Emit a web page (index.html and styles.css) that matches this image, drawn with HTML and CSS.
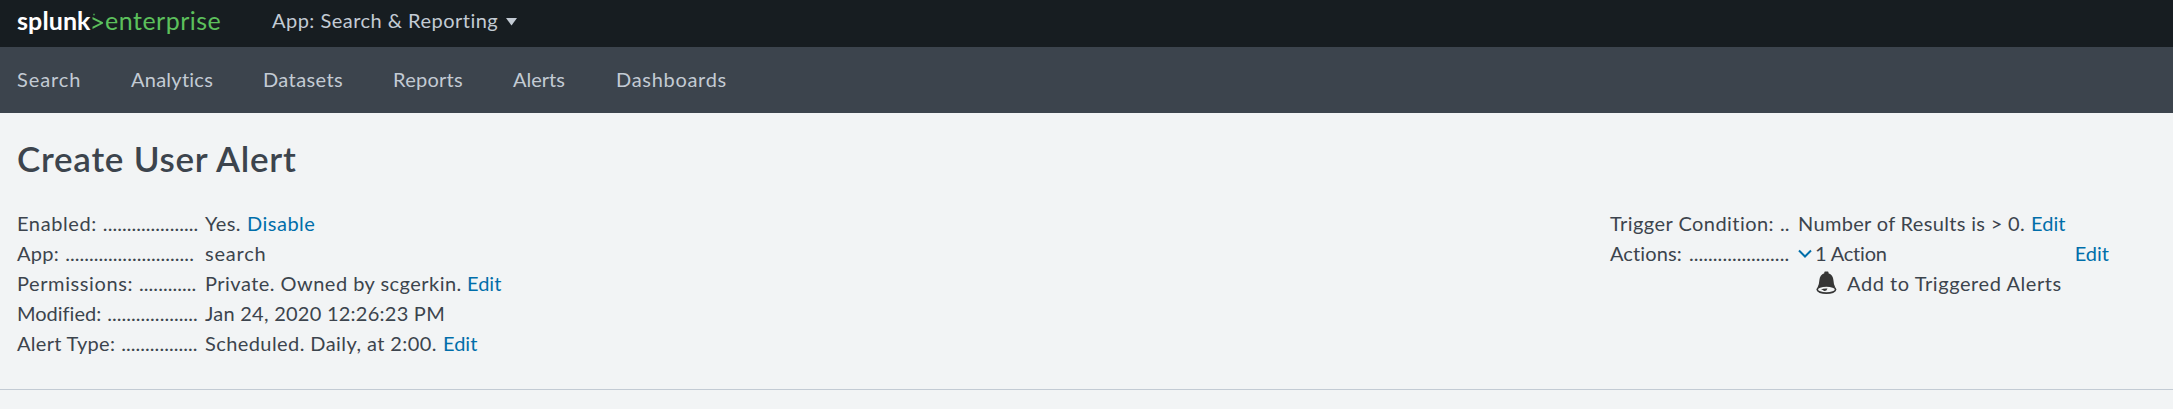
FILE: index.html
```html
<!DOCTYPE html>
<html lang="en">
<head>
<meta charset="utf-8">
<title>Create User Alert | Splunk</title>
<link rel="stylesheet" href="styles.css">
</head>
<body>
<header class="topbar">
  <a class="logo"><span class="logo-name">splunk</span><svg class="logo-mark" viewBox="0 0 12 18" width="12" height="18"><path d="M0.5 5 L11 10.3 V11.6 L0.5 17 V14.8 L8.2 11 L0.5 7.2 Z" fill="#5cc05c"/><path d="M1 2.6h2M2 1.5v2" stroke="#3c8c46" stroke-width="1"/></svg><span class="logo-product">enterprise</span></a>
  <a class="app-menu"><span class="app-name">App: Search &amp; Reporting</span><svg class="caret" viewBox="0 0 11 8" width="11" height="8"><path d="M0 0H11L5.5 7.5Z" fill="#c3cbd4"/></svg></a>
</header>
<nav class="appnav">
  <a class="nav-search">Search</a>
  <a class="nav-analytics">Analytics</a>
  <a class="nav-datasets">Datasets</a>
  <a class="nav-reports">Reports</a>
  <a class="nav-alerts">Alerts</a>
  <a class="nav-dashboards">Dashboards</a>
</nav>
<main class="page">
  <h1 class="title">Create User Alert</h1>
  <div class="details">
    <dl class="facts facts-main">
      <dt><span class="k-enabled">Enabled:</span><span class="dots">....................</span></dt>
      <dd><span class="v-yes">Yes.</span><a class="link l-disable">Disable</a></dd>
      <dt><span class="k-app">App:</span><span class="dots">...........................</span></dt>
      <dd><span class="v-search">search</span></dd>
      <dt><span class="k-perm">Permissions:</span><span class="dots">............</span></dt>
      <dd><span class="v-owner">Private. Owned by scgerkin.</span><a class="link">Edit</a></dd>
      <dt><span class="k-modified">Modified:</span><span class="dots">...................</span></dt>
      <dd><span class="v-date">Jan 24, 2020 12:26:23 PM</span></dd>
      <dt><span class="k-type">Alert Type:</span><span class="dots">................</span></dt>
      <dd><span class="v-schedule">Scheduled. Daily, at 2:00.</span><a class="link">Edit</a></dd>
    </dl>
    <dl class="facts facts-trigger">
      <dt><span class="k-trigger">Trigger Condition:</span><span class="dots">..</span></dt>
      <dd><span class="v-condition">Number of Results is &gt; 0.</span><a class="link">Edit</a></dd>
      <dt><span class="k-actions">Actions:</span><span class="dots">.....................</span></dt>
      <dd class="actions">
        <svg class="chevron" viewBox="0 0 14 10" width="14" height="10"><path d="M1 1.5L7 7.5L13 1.5" fill="none" stroke="#006eaa" stroke-width="2"/></svg>
        <span class="v-count">1 Action</span>
        <a class="link actions-edit">Edit</a>
      </dd>
      <dd class="action-item">
        <svg class="bell" viewBox="0 0 21 24" width="21" height="24"><path d="M8.3 2.2V1.2Q8.3 .4 9.2 .4H11.6Q12.5 .4 12.5 1.2V2.2Q17 4 17.4 9Q17.6 13.4 19.3 16.4H1.5Q3.2 13.4 3.4 9Q3.8 4 8.3 2.2Z" fill="#363636"/><ellipse cx="10.4" cy="18.6" rx="9.2" ry="3.6" fill="#f2f4f5" stroke="#363636" stroke-width="1.7"/><path d="M5 18.7Q7 17.2 11.5 17.5Q10.7 20 8.5 20Q7.5 20 7 19.1Z" fill="#363636"/></svg>
        <span class="v-item">Add to Triggered Alerts</span>
      </dd>
    </dl>
  </div>
</main>
</body>
</html>
```
FILE: styles.css
```css
* { box-sizing: border-box; }
body { margin: 0; height: 409px; overflow: hidden; background: #f2f4f5; color: #3c444d; font: 20px/30px Lato, "Open Sans", sans-serif; font-variant-ligatures: none; }
.topbar { display: flex; align-items: center; height: 47px; padding: 0 17px 7px; background: #171d21; white-space: nowrap; }
.logo { display: flex; align-items: center; width: 255px; font-size: 25px; }
.logo-name { color: #fff; font-weight: 700; width: 75px; letter-spacing: 0.1px; }
.logo-mark { margin-top: 1px; }
.logo-product { color: #5cc05c; margin-left: 1px; letter-spacing: 0.5px; }
.app-menu { display: flex; align-items: center; color: #c3cbd4; }
.app-name { width: 234px; letter-spacing: 0.48px; }
.caret { margin-top: 4px; }
.appnav { display: flex; align-items: center; height: 66px; padding: 0 17px 2px; background: #3c444d; color: #c3cbd4; }
.nav-search { width: 114px; letter-spacing: 0.9px; }
.nav-analytics { width: 132px; letter-spacing: 0.25px; }
.nav-datasets { width: 130px; letter-spacing: 0.4px; }
.nav-reports { width: 120px; letter-spacing: 0.25px; }
.nav-alerts { width: 103px; }
.nav-dashboards { letter-spacing: 0.7px; }
.page { border-bottom: 1px solid #c3cbd4; height: 277px; padding: 25px 17px 0; }
.title { margin: 0; font-size: 35px; line-height: 40px; font-weight: 600; letter-spacing: 0.75px; }
.details { display: flex; justify-content: space-between; padding-top: 30px; white-space: nowrap; }
.facts { display: grid; grid-auto-rows: 30px; margin: 0; }
.facts-main { grid-template-columns: 188px auto; }
.facts-trigger { grid-template-columns: 188px 358px; }
.facts dt, .facts dd { display: flex; align-items: center; margin: 0; }
.facts dt { width: 180px; gap: 6px; }
.facts dd { gap: 6px; }
.dots { letter-spacing: 0.05px; }
.k-enabled { letter-spacing: 0.6px; }
.k-app { letter-spacing: 0.3px; }
.k-perm { letter-spacing: 0.6px; }
.k-type { letter-spacing: 0.3px; }
.k-trigger { width: 164px; letter-spacing: 0.45px; }
.k-actions { width: 73px; letter-spacing: 0.1px; }
.v-yes { width: 36px; letter-spacing: 0.4px; }
.v-search { letter-spacing: 0.8px; }
.v-owner { width: 256px; letter-spacing: 0.47px; }
.v-date { letter-spacing: 0.25px; }
.v-schedule { width: 232px; letter-spacing: 0.42px; }
.v-condition { letter-spacing: 0.33px; }
.v-count { letter-spacing: -0.2px; }
.v-item { letter-spacing: 0.57px; }
.link { color: #006eaa; }
.l-disable { letter-spacing: 0.5px; }
.facts .actions { gap: 3px; }
.chevron { margin-top: 2px; }
.actions-edit { margin-left: auto; margin-right: 47px; }
.facts .action-item { grid-column: 2; gap: 10px; padding-left: 18px; }
.bell { margin-bottom: 1px; }
```
